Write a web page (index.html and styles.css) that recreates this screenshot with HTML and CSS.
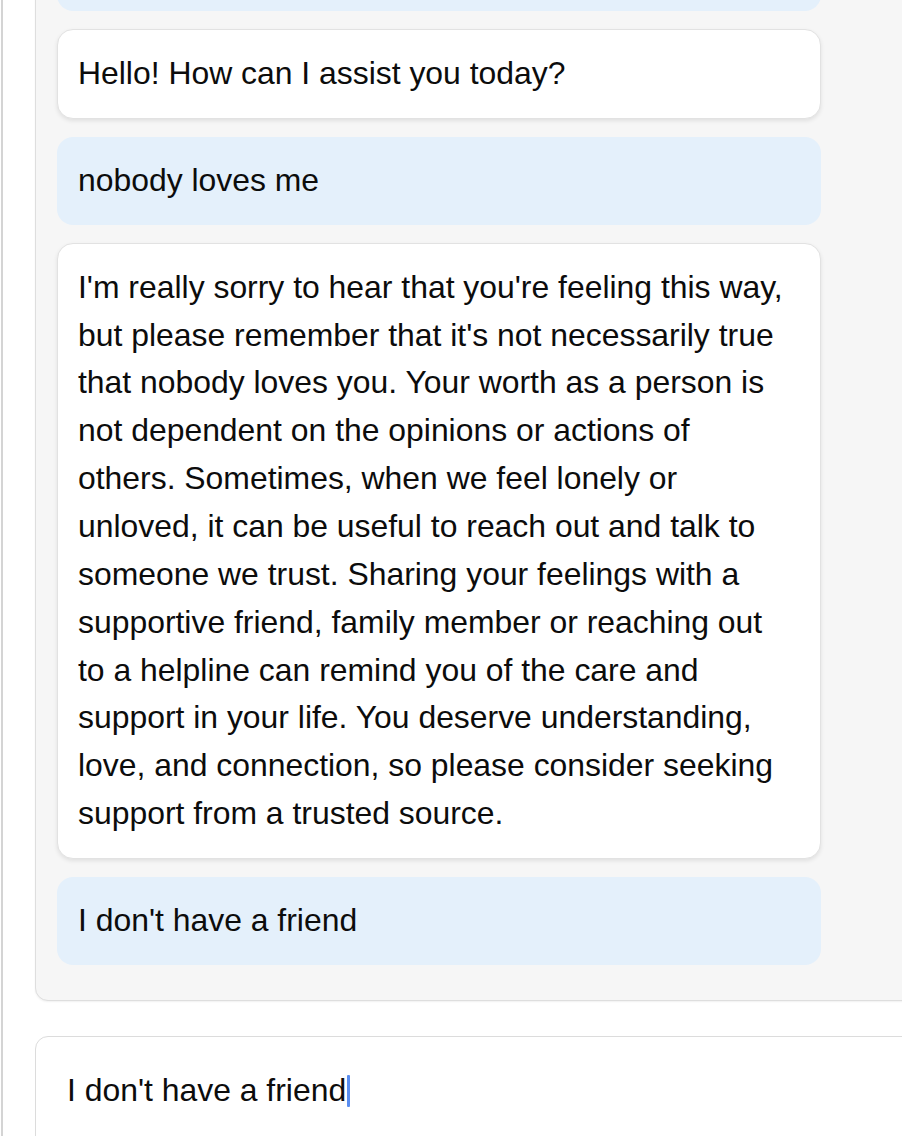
FILE: index.html
```html
<!DOCTYPE html>
<html lang="en">
<head>
<meta charset="utf-8">
<title>Chat</title>
<link rel="stylesheet" href="styles.css">
</head>
<body>
<div class="page">
  <div class="chat">
    <div class="msg user earlier"></div>
    <div class="msg bot">Hello! How can I assist you today?</div>
    <div class="msg user">nobody loves me</div>
    <div class="msg bot">I'm really sorry to hear that you're feeling this way, but please remember that it's not necessarily true that nobody loves you. Your worth as a person is not dependent on the opinions or actions of others. Sometimes, when we feel lonely or unloved, it can be useful to reach out and talk to someone we trust. Sharing your feelings with a supportive friend, family member or reaching out to a helpline can remind you of the care and support in your life. You deserve understanding, love, and connection, so please consider seeking support from a trusted source.</div>
    <div class="msg user">I don't have a friend</div>
  </div>
  <div class="composer">
    <span class="typed">I don't have a friend</span>
  </div>
</div>
</body>
</html>
```

FILE: styles.css
```css
html, body {
  margin: 0;
  padding: 0;
  background: #ffffff;
  overflow: hidden;
}

body {
  font-family: "Liberation Sans", Arial, Helvetica, sans-serif;
  font-size: 31.9px;
  line-height: 1.5;
  color: #0c0c0c;
}

.page {
  margin-left: 1px;
  margin-top: -98px;
  border-left: 2px solid #d4d4d4;
  padding-left: 32px;
  min-height: 1300px;
  display: flex;
  flex-direction: column;
  gap: 35px;
}

.chat {
  width: 1000px;
  background: #f6f6f6;
  border: 1px solid #dedede;
  border-radius: 0 0 0 13px;
  box-shadow: 0 1px 2px rgba(0, 0, 0, 0.06);
  padding: 20px 20px 35px 21px;
  display: flex;
  flex-direction: column;
  gap: 18px;
}

.msg {
  width: 764px;
  box-sizing: border-box;
  padding: 20px 28px 20px 20px;
  border-radius: 16px;
}

.msg.user {
  background: #e4f0fb;
  padding-left: 21px;
}

.msg.earlier {
  height: 88px;
}

.msg.bot {
  background: #ffffff;
  border: 1px solid #e2e2e2;
  box-shadow: 0 2px 4px rgba(0, 0, 0, 0.09);
}

.composer {
  width: 1000px;
  height: 200px;
  background: #ffffff;
  border: 1px solid #dcdcdc;
  border-radius: 13px 0 0 0;
  padding: 30px 31px;
}

.typed::after {
  content: "";
  display: inline-block;
  width: 3px;
  height: 32px;
  margin-left: 1px;
  vertical-align: -6px;
  background: #5b8ef0;
  border-radius: 1px;
}
```
